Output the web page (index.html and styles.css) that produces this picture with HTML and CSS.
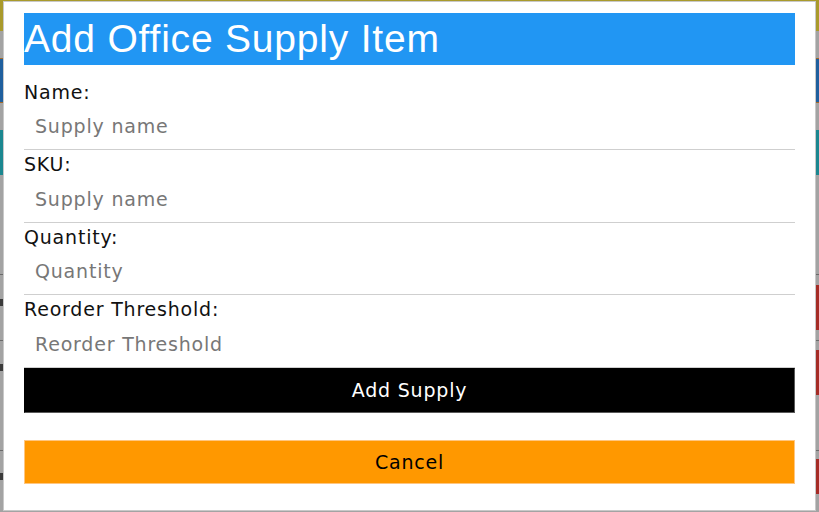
FILE: index.html
```html
<!DOCTYPE html>
<html lang="en">
<head>
<meta charset="utf-8">
<title>Add Office Supply Item</title>
<link rel="stylesheet" href="styles.css">
</head>
<body>
<div class="page">
  <div class="band band-header"></div>
  <div class="band band-gap1"></div>
  <div class="band band-blue"></div>
  <div class="band band-gap2"></div>
  <div class="band band-teal"></div>
  <div class="rows">
    <div class="row row-1"><span class="row-mark"></span><span class="row-del"></span></div>
    <div class="row row-2"><span class="row-mark"></span><span class="row-del"></span></div>
    <div class="row row-3"><span class="row-mark"></span><span class="row-del row-del-short"></span></div>
  </div>
</div>

<div class="modal" role="dialog" aria-labelledby="modal-title">
  <h2 class="modal-title" id="modal-title">Add Office Supply Item</h2>
  <form class="supply-form">
    <div class="field">
      <label class="field-label" for="name">Name:</label>
      <input class="field-input" id="name" type="text" placeholder="Supply name">
    </div>
    <div class="field">
      <label class="field-label" for="sku">SKU:</label>
      <input class="field-input" id="sku" type="text" placeholder="Supply name">
    </div>
    <div class="field">
      <label class="field-label" for="qty">Quantity:</label>
      <input class="field-input" id="qty" type="text" placeholder="Quantity">
    </div>
    <div class="field">
      <label class="field-label" for="reorder">Reorder Threshold:</label>
      <input class="field-input" id="reorder" type="text" placeholder="Reorder Threshold">
    </div>
    <button class="btn btn-add" type="button">Add Supply</button>
    <button class="btn btn-cancel" type="button">Cancel</button>
  </form>
</div>
</body>
</html>
```

FILE: styles.css
```css
html, body {
  margin: 0;
  padding: 0;
}

body {
  background: #a3a3a3;
  width: 819px;
  height: 512px;
  overflow: hidden;
  font-family: "DejaVu Sans", Verdana, sans-serif;
}

/* dimmed page behind the dialog */
.page {
  display: flex;
  flex-direction: column;
  height: 512px;
}

.band-header {
  height: 31px;
  background: #a99a2b;
}

.band-gap1 {
  height: 27px;
  background: #a3a3a3;
}

.band-blue {
  height: 45px;
  background: #1f5f9e;
  border-top: 1px solid #a06a2a;
  border-bottom: 1px solid #a06a2a;
  box-sizing: border-box;
}

.band-gap2 {
  height: 27px;
  background: #a3a3a3;
}

.band-teal {
  height: 45px;
  background: #1b8790;
}

.rows {
  display: flex;
  flex-direction: column;
  padding-top: 99px;
}

.row {
  display: flex;
  justify-content: space-between;
  align-items: flex-start;
  border-top: 1px solid #6a6a6a;
  box-sizing: border-box;
}

.row-1 {
  height: 66px;
  padding-top: 10px;
}

.row-2 {
  height: 110px;
  padding-top: 9px;
}

.row-3 {
  height: 62px;
  padding-top: 8px;
}

.row-mark {
  width: 3px;
  height: 7px;
  background: #3a3a3a;
  margin-top: 14px;
}

.row-del {
  width: 3px;
  height: 45px;
  background: #a52c26;
}

.row-del-short {
  height: 35px;
}

/* dialog */
.modal {
  position: fixed;
  top: 1px;
  left: 3px;
  width: 813px;
  height: 510px;
  box-sizing: border-box;
  background: #fff;
  border: 1px solid #c8c8c8;
  padding: 11px 20px;
}

.modal-title {
  margin: 0 0 12.5px;
  height: 52px;
  background: #2196f3;
  color: #fff;
  font-family: "Liberation Sans", Arial, sans-serif;
  font-weight: normal;
  font-size: 39px;
  letter-spacing: 0.8px;
  line-height: 52px;
  white-space: nowrap;
}

.supply-form {
  display: flex;
  flex-direction: column;
}

.field {
  display: flex;
  flex-direction: column;
  padding-top: 3px;
}

.field-label {
  display: block;
  font-size: 19px;
  letter-spacing: 0.8px;
  line-height: 22.5px;
  color: #111;
}

.field-input {
  display: block;
  width: 100%;
  height: 47px;
  box-sizing: border-box;
  margin: 0;
  border: none;
  border-bottom: 1px solid #cfcfcf;
  padding: 0 11px;
  font-family: "DejaVu Sans", Verdana, sans-serif;
  font-size: 19px;
  letter-spacing: 0.8px;
  color: #222;
  background: #fff;
  outline: none;
}

.field-input::placeholder {
  color: #777;
}

.btn {
  display: block;
  width: 100%;
  box-sizing: border-box;
  margin: 0;
  padding: 0;
  font-family: "DejaVu Sans", Verdana, sans-serif;
  font-size: 19px;
  letter-spacing: 0.8px;
  cursor: pointer;
}

.btn-add {
  height: 45px;
  background: #000;
  color: #fff;
  border: 1px solid #000;
  border-right-color: #5a5a5a;
  border-bottom-color: #5a5a5a;
}

.btn-cancel {
  height: 44.5px;
  margin-top: 27px;
  background: #ff9800;
  color: #000;
  border: 1px solid #ffc680;
}
```
